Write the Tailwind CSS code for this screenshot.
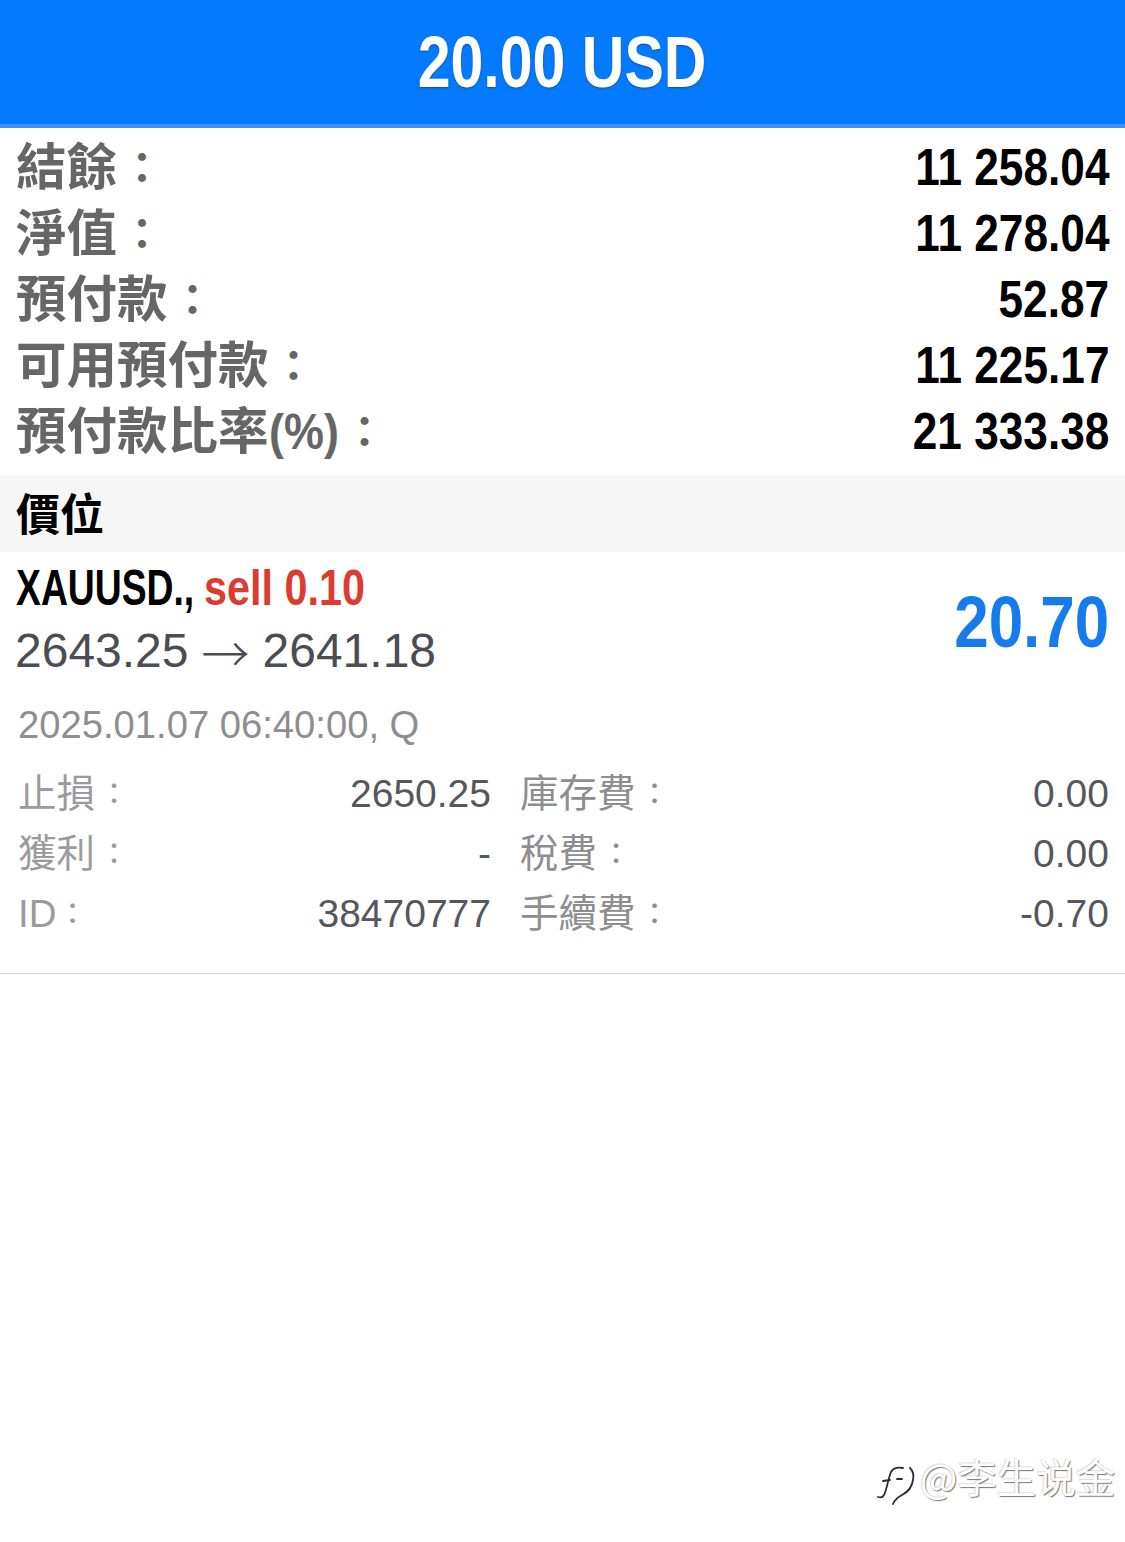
<!DOCTYPE html>
<html lang="zh-Hant">
<head>
  <meta charset="UTF-8">
  <script src="https://cdn.jsdelivr.net/npm/@tailwindcss/browser@4"></script>
  <title>Position</title>
</head>
<body class="bg-white font-['Liberation_Sans','Noto_Sans_CJK_TC',sans-serif]">
  <div class="relative w-[1125px] h-[1542px] overflow-hidden">
    <header class="h-[128px] bg-[#047aff] border-b-[4px] border-[#3f8ffb] flex items-center justify-center">
      <span class="inline-block text-[72px] font-bold text-white leading-none scale-x-[0.82] whitespace-nowrap [text-shadow:0_1px_2px_#0b4fa0]">20.00 USD</span>
    </header>

    <section class="h-[347px] pt-[6px] pl-[16px] pr-[16px] flex flex-col">
      <div class="h-[66px] flex items-center justify-between">
        <span class="flex items-center pt-[3px] text-[50.5px] font-bold text-[#666666] leading-none">結餘<span class="w-[50px] text-center text-[42px]">：</span></span>
        <span class="inline-block origin-right scale-x-[0.85] text-[52px] font-bold text-black leading-none">11 258.04</span>
      </div>
      <div class="h-[66px] flex items-center justify-between">
        <span class="flex items-center pt-[3px] text-[50.5px] font-bold text-[#666666] leading-none">淨值<span class="w-[50px] text-center text-[42px]">：</span></span>
        <span class="inline-block origin-right scale-x-[0.85] text-[52px] font-bold text-black leading-none">11 278.04</span>
      </div>
      <div class="h-[66px] flex items-center justify-between">
        <span class="flex items-center pt-[3px] text-[50.5px] font-bold text-[#666666] leading-none">預付款<span class="w-[50px] text-center text-[42px]">：</span></span>
        <span class="inline-block origin-right scale-x-[0.85] text-[52px] font-bold text-black leading-none">52.87</span>
      </div>
      <div class="h-[66px] flex items-center justify-between">
        <span class="flex items-center pt-[3px] text-[50.5px] font-bold text-[#666666] leading-none">可用預付款<span class="w-[50px] text-center text-[42px]">：</span></span>
        <span class="inline-block origin-right scale-x-[0.85] text-[52px] font-bold text-black leading-none">11 225.17</span>
      </div>
      <div class="h-[66px] flex items-center justify-between">
        <span class="flex items-center pt-[3px] text-[50.5px] font-bold text-[#666666] leading-none">預付款比率<span class="inline-block w-[71px] origin-left scale-x-[0.89]">(%)</span><span class="w-[50px] text-center text-[42px]">：</span></span>
        <span class="inline-block origin-right scale-x-[0.85] text-[52px] font-bold text-black leading-none">21 333.38</span>
      </div>
    </section>

    <div class="h-[77px] bg-[#f6f6f6] flex items-center pl-[16px]">
      <span class="pt-[5px] text-[44px] font-bold text-black leading-none">價位</span>
    </div>

    <section class="h-[422px] border-b border-[#cfcfcf] pl-[16px] pr-[16px]">
      <div class="flex justify-between items-center h-[140px]">
        <div class="-mt-[14px]">
          <div class="h-[68px] pt-[2px] flex items-center text-[50px] font-bold leading-none whitespace-nowrap">
            <span class="inline-block w-[188px] origin-left scale-x-[0.746] text-black">XAUUSD.,</span>
            <span class="inline-block origin-left scale-x-[0.827] text-[#dc3c30]">sell 0.10</span>
          </div>
          <div class="h-[56px] pt-[4px] flex items-center text-[48px] text-[#4b4d52] leading-none whitespace-nowrap -ml-[1px]">2643.25<span class="mx-[13px] font-['Noto_Sans_CJK_TC'] font-light">→</span>2641.18</div>
        </div>
        <span class="inline-block origin-right scale-x-[0.86] text-[72px] font-bold text-[#167ceb] leading-none">20.70</span>
      </div>
      <div class="h-[62px] mt-[2px] flex items-center pl-[2px] text-[38.2px] text-[#8e8e90] leading-none">2025.01.07 06:40:00, Q</div>
      <div class="grid grid-cols-[475px_1fr] mt-[8px] leading-none">
        <div class="h-[60px] pl-[2px] flex items-center justify-between"><span class="flex items-center text-[38.5px] text-[#9b9b9d]">止損<span class="w-[38px] text-center text-[30px]">：</span></span><span class="-mt-[2px] text-[39px] text-[#55575c]">2650.25</span></div>
        <div class="h-[60px] pl-[29px] flex items-center justify-between"><span class="flex items-center text-[38.5px] text-[#8e8e90]">庫存費<span class="w-[38px] text-center text-[30px]">：</span></span><span class="-mt-[2px] text-[39px] text-[#55575c]">0.00</span></div>
        <div class="h-[60px] pl-[2px] flex items-center justify-between"><span class="flex items-center text-[38.5px] text-[#9b9b9d]">獲利<span class="w-[38px] text-center text-[30px]">：</span></span><span class="-mt-[2px] text-[39px] text-[#55575c]">-</span></div>
        <div class="h-[60px] pl-[29px] flex items-center justify-between"><span class="flex items-center text-[38.5px] text-[#8e8e90]">稅費<span class="w-[38px] text-center text-[30px]">：</span></span><span class="-mt-[2px] text-[39px] text-[#55575c]">0.00</span></div>
        <div class="h-[60px] pl-[2px] flex items-center justify-between"><span class="flex items-center text-[38.5px] text-[#9b9b9d]">ID<span class="-ml-[3px] w-[38px] text-center text-[30px]">：</span></span><span class="-mt-[2px] text-[39px] text-[#55575c]">38470777</span></div>
        <div class="h-[60px] pl-[29px] flex items-center justify-between"><span class="flex items-center text-[38.5px] text-[#8e8e90]">手續費<span class="w-[38px] text-center text-[30px]">：</span></span><span class="-mt-[2px] text-[39px] text-[#55575c]">-0.70</span></div>
      </div>
    </section>

    <!-- watermark -->
    <div class="absolute left-[870px] top-[1455px] flex items-center">
      <svg width="50" height="55" viewBox="0 0 50 55" fill="none" stroke="#2a2a2a" stroke-width="1.8" stroke-linecap="round">
        <path d="M33 13c-6-1-10 0-12 4-3 7-4 17-7 23-1 2-3 3-6 2"/>
        <path d="M13 26l7-1M27 24h5"/>
        <path d="M40 13c3 3 4 7 3 12-1 7-5 12-11 15-4 2-7 4-9 9"/>
      </svg>
      <span class="text-[39.5px] leading-none text-white whitespace-nowrap font-['Noto_Sans_CJK_SC',sans-serif] -mt-[14px] [text-shadow:1px_1px_1px_#777,-1px_-1px_1px_#ddd]">@李生说金</span>
    </div>
  </div>
</body>
</html>
